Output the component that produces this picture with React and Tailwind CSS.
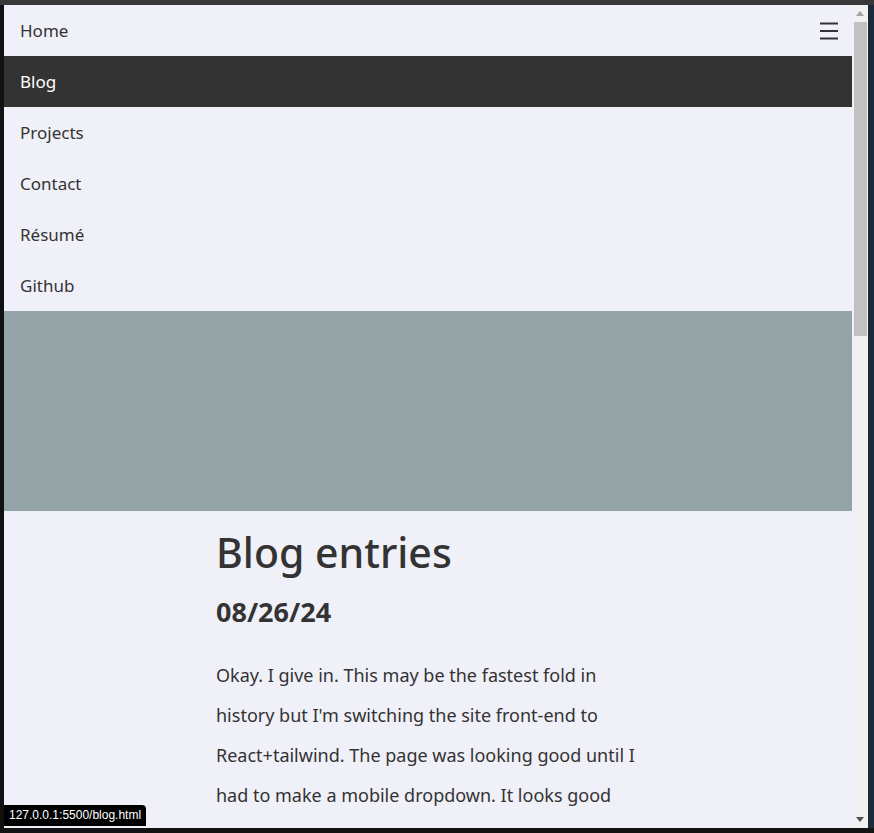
const NAV = ['Home', 'Blog', 'Projects', 'Contact', 'Résumé', 'Github'];

function Hamburger() {
  return (
    <svg width="18" height="18" viewBox="0 0 18 18" className="text-[#333]">
      <path d="M0 1.5h18M0 9h18M0 16.5h18" stroke="currentColor" strokeWidth="2" />
    </svg>
  );
}

function Scrollbar() {
  return (
    <div className="w-[16px] bg-[#f1f1f1] flex flex-col items-center">
      <div className="h-[17px] flex items-center justify-center">
        <svg width="8" height="5" viewBox="0 0 8 5"><path d="M0 5L4 0L8 5Z" fill="#a3a3a3" /></svg>
      </div>
      <div className="w-[13px] h-[314px] bg-[#c1c1c1]" />
      <div className="flex-1" />
      <div className="h-[17px] flex items-center justify-center">
        <svg width="8" height="5" viewBox="0 0 8 5"><path d="M0 0L4 5L8 0Z" fill="#505050" /></svg>
      </div>
    </div>
  );
}

export default function App() {
  return (
    <div className="relative w-[874px] h-[833px] bg-[#141414] flex flex-col overflow-hidden" style={{ fontFamily: '"Noto Sans", sans-serif' }}>
      <div className="h-[5px] bg-[#383838]" />
      <div className="flex h-[823px]">
        <div className="w-[4px] bg-[#111]" />
        <main className="w-[848px] bg-[#f0f0f8] text-[#333] overflow-hidden">
          <nav>
            {NAV.map((label, i) => (
              <div
                key={label}
                className={`h-[51px] flex items-center justify-between pl-4 pr-[14px] text-[17px] ${
                  label === 'Blog' ? 'bg-[#333] text-white' : ''
                }`}
              >
                <span>{label}</span>
                {i === 0 && <Hamburger />}
              </div>
            ))}
          </nav>
          <div className="h-[200px] bg-[#93a3a6]" />
          <section className="w-[424px] mx-auto">
            <h1 className="text-[41px] font-medium leading-[58px] mt-[12px]">Blog entries</h1>
            <h2 className="text-[27px] font-bold leading-[36px] mt-[13px]">08/26/24</h2>
            <p className="text-[18px] leading-[40px] mt-[25px]">
              Okay. I give in. This may be the fastest fold in history but I'm switching the site front-end to
              React+tailwind. The page was looking good until I had to make a mobile dropdown. It looks good
            </p>
          </section>
        </main>
        <Scrollbar />
        <div className="w-[6px] bg-[#1c2a3c]" />
      </div>
      <div className="flex-1 bg-[#141414]" />
      <div className="absolute left-[4px] top-[805px] h-[21px] px-[5px] bg-black text-white text-[12px] leading-[21px] rounded-tr-[4px]" style={{ fontFamily: '"Liberation Sans", sans-serif' }}>
        127.0.0.1:5500/blog.html
      </div>
    </div>
  );
}
